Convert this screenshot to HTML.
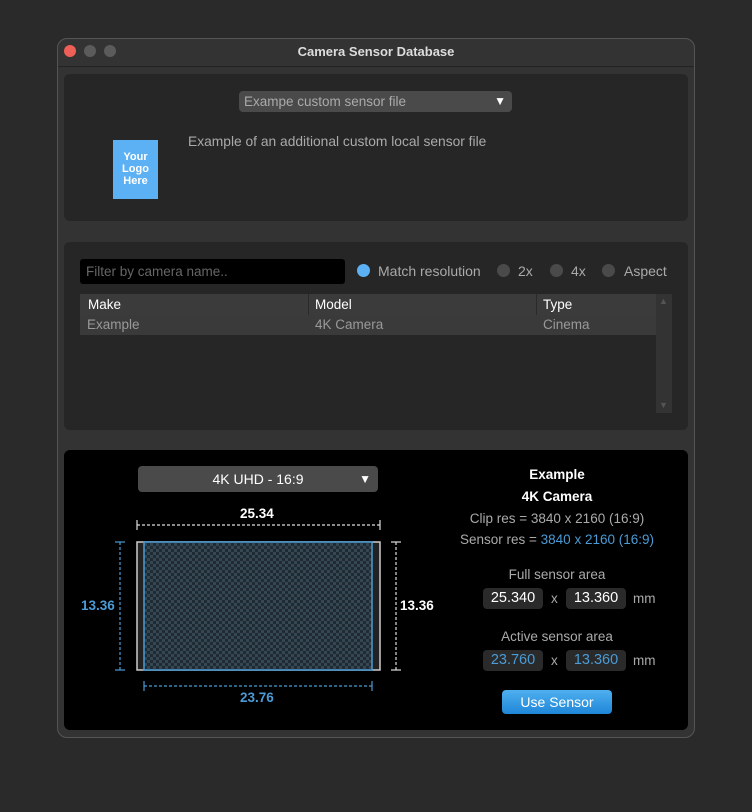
<!DOCTYPE html><html><head><style>
*{margin:0;padding:0;box-sizing:border-box}
body{width:752px;height:812px;background:#2a2a2a;font-family:"Liberation Sans",sans-serif;position:relative;overflow:hidden;font-size:13.5px}
.a{position:absolute}
.win{left:57px;top:38px;width:638px;height:700px;background:#333;border:1px solid #555;border-radius:10px}
.p{background:#262626;border-radius:6px}
.dot{width:12px;height:12px;border-radius:50%;top:45px}
.c{text-align:center}
.box{background:#2a2a2a;border-radius:4px;height:21px;color:#fff;font-size:14.5px;text-align:center;line-height:21px}
.rad{width:13px;height:13px;border-radius:50%;background:#4a4a4a;top:264px}
</style></head><body>
<div class="a win"></div>
<div class="a dot" style="left:64px;background:#ee5f57"></div>
<div class="a dot" style="left:84px;background:#5b5b5b"></div>
<div class="a dot" style="left:104px;background:#5b5b5b"></div>
<div class="a" style="left:58px;top:66px;width:636px;height:1px;background:#222"></div>
<div class="a c" style="left:58px;top:44px;width:636px;color:#ddd;font-weight:bold;font-size:13px">Camera Sensor Database</div>

<div class="a p" style="left:64px;top:74px;width:624px;height:147px"></div>
<div class="a" style="left:239px;top:91px;width:273px;height:21px;background:#4a4a4a;border-radius:4px;color:#aaa;font-size:13.5px;line-height:21px;padding-left:5px">Exampe custom sensor file<span class="a" style="right:6px;top:0;color:#fff;font-size:12px">▼</span></div>
<div class="a" style="left:188px;top:134px;color:#aaa;font-size:13.8px">Example of an additional custom local sensor file</div>
<div class="a c" style="left:113px;top:140px;width:45px;height:59px;background:#5cb0f4;color:#fff;font-weight:bold;font-size:11px;line-height:12px;padding-top:11px">Your<br>Logo<br>Here</div>

<div class="a p" style="left:64px;top:242px;width:624px;height:188px"></div>
<div class="a" style="left:80px;top:259px;width:265px;height:25px;background:#000;border-radius:3px;color:#666;line-height:25px;padding-left:6px">Filter by camera name..</div>
<div class="a rad" style="left:357px;background:#5cb0f4"></div>
<div class="a" style="left:378px;top:263px;color:#aaa;font-size:14px">Match resolution</div>
<div class="a rad" style="left:497px"></div><div class="a" style="left:518px;top:263px;color:#aaa;font-size:14px">2x</div>
<div class="a rad" style="left:550px"></div><div class="a" style="left:571px;top:263px;color:#aaa;font-size:14px">4x</div>
<div class="a rad" style="left:602px"></div><div class="a" style="left:624px;top:263px;color:#aaa;font-size:14px">Aspect</div>
<div class="a" style="left:80px;top:294px;width:576px;height:21px;background:#3b3b3b"></div>
<div class="a" style="left:308px;top:294px;width:1px;height:21px;background:#2a2a2a"></div>
<div class="a" style="left:536px;top:294px;width:1px;height:21px;background:#2a2a2a"></div>
<div class="a" style="left:88px;top:297px;color:#fff">Make</div>
<div class="a" style="left:315px;top:297px;color:#fff">Model</div>
<div class="a" style="left:543px;top:297px;color:#fff">Type</div>
<div class="a" style="left:80px;top:315px;width:576px;height:20px;background:#3a3a3a"></div>
<div class="a" style="left:87px;top:317px;color:#999">Example</div>
<div class="a" style="left:315px;top:317px;color:#999">4K Camera</div>
<div class="a" style="left:543px;top:317px;color:#999">Cinema</div>
<div class="a" style="left:656px;top:294px;width:16px;height:119px;background:#333"></div>
<div class="a" style="left:659px;top:296px;color:#555;font-size:9px">▲</div>
<div class="a" style="left:659px;top:400px;color:#555;font-size:9px">▼</div>

<div class="a" style="left:64px;top:450px;width:624px;height:280px;background:#000;border-radius:6px"></div>
<div class="a" style="left:138px;top:466px;width:240px;height:26px;background:#4a4a4a;border-radius:4px;color:#fff;font-size:14px;line-height:26px;text-align:center">4K UHD - 16:9<span class="a" style="right:7px;top:0;font-size:12px">▼</span></div>
<svg class="a" style="left:0;top:0" width="752" height="812">
<defs><pattern id="ck" width="6" height="6" patternUnits="userSpaceOnUse"><rect width="6" height="6" fill="#354753"/><rect width="3" height="3" fill="#1f2a32"/><rect x="3" y="3" width="3" height="3" fill="#1f2a32"/></pattern></defs>
<rect x="137" y="542" width="243" height="128" fill="#222" stroke="#ccc" stroke-width="1.5"/>
<rect x="144" y="542" width="228" height="128" fill="url(#ck)" stroke="#4a9bd6" stroke-width="1.5"/>
<g stroke="#ddd" stroke-width="1.2"><line x1="137" y1="525" x2="380" y2="525" stroke-dasharray="3,2"/><line x1="137" y1="520" x2="137" y2="530"/><line x1="380" y1="520" x2="380" y2="530"/>
<line x1="396" y1="542" x2="396" y2="670" stroke-dasharray="3,2"/><line x1="391" y1="542" x2="401" y2="542"/><line x1="391" y1="670" x2="401" y2="670"/></g>
<g stroke="#4a9bd6" stroke-width="1.2"><line x1="120" y1="542" x2="120" y2="670" stroke-dasharray="3,2"/><line x1="115" y1="542" x2="125" y2="542"/><line x1="115" y1="670" x2="125" y2="670"/>
<line x1="144" y1="686" x2="372" y2="686" stroke-dasharray="3,2"/><line x1="144" y1="681" x2="144" y2="691"/><line x1="372" y1="681" x2="372" y2="691"/></g>
</svg>
<div class="a" style="left:240px;top:506px;color:#fff;font-weight:bold">25.34</div>
<div class="a" style="left:81px;top:598px;color:#4a9bd6;font-weight:bold">13.36</div>
<div class="a" style="left:400px;top:598px;color:#fff;font-weight:bold">13.36</div>
<div class="a" style="left:240px;top:690px;color:#4a9bd6;font-weight:bold">23.76</div>

<div class="a c" style="left:440px;top:467px;width:234px;color:#fff;font-weight:bold">Example</div>
<div class="a c" style="left:440px;top:489px;width:234px;color:#fff;font-weight:bold">4K Camera</div>
<div class="a c" style="left:440px;top:511px;width:234px;color:#aaa">Clip res = 3840 x 2160 (16:9)</div>
<div class="a c" style="left:440px;top:532px;width:234px;color:#aaa">Sensor res = <span style="color:#4a9bd6">3840 x 2160 (16:9)</span></div>
<div class="a c" style="left:440px;top:567px;width:234px;color:#aaa">Full sensor area</div>
<div class="a box" style="left:483px;top:588px;width:60px">25.340</div>
<div class="a" style="left:551px;top:591px;color:#aaa">x</div>
<div class="a box" style="left:566px;top:588px;width:60px">13.360</div>
<div class="a" style="left:633px;top:591px;color:#aaa">mm</div>
<div class="a c" style="left:440px;top:629px;width:234px;color:#aaa">Active sensor area</div>
<div class="a box" style="left:483px;top:650px;width:60px;color:#4a9bd6">23.760</div>
<div class="a" style="left:551px;top:653px;color:#aaa">x</div>
<div class="a box" style="left:566px;top:650px;width:60px;color:#4a9bd6">13.360</div>
<div class="a" style="left:633px;top:653px;color:#aaa">mm</div>
<div class="a c" style="left:502px;top:690px;width:110px;height:24px;border-radius:4px;background:linear-gradient(#4fb0f0,#1f86d8);color:#fff;line-height:24px;font-size:14px">Use Sensor</div>
</body></html>
